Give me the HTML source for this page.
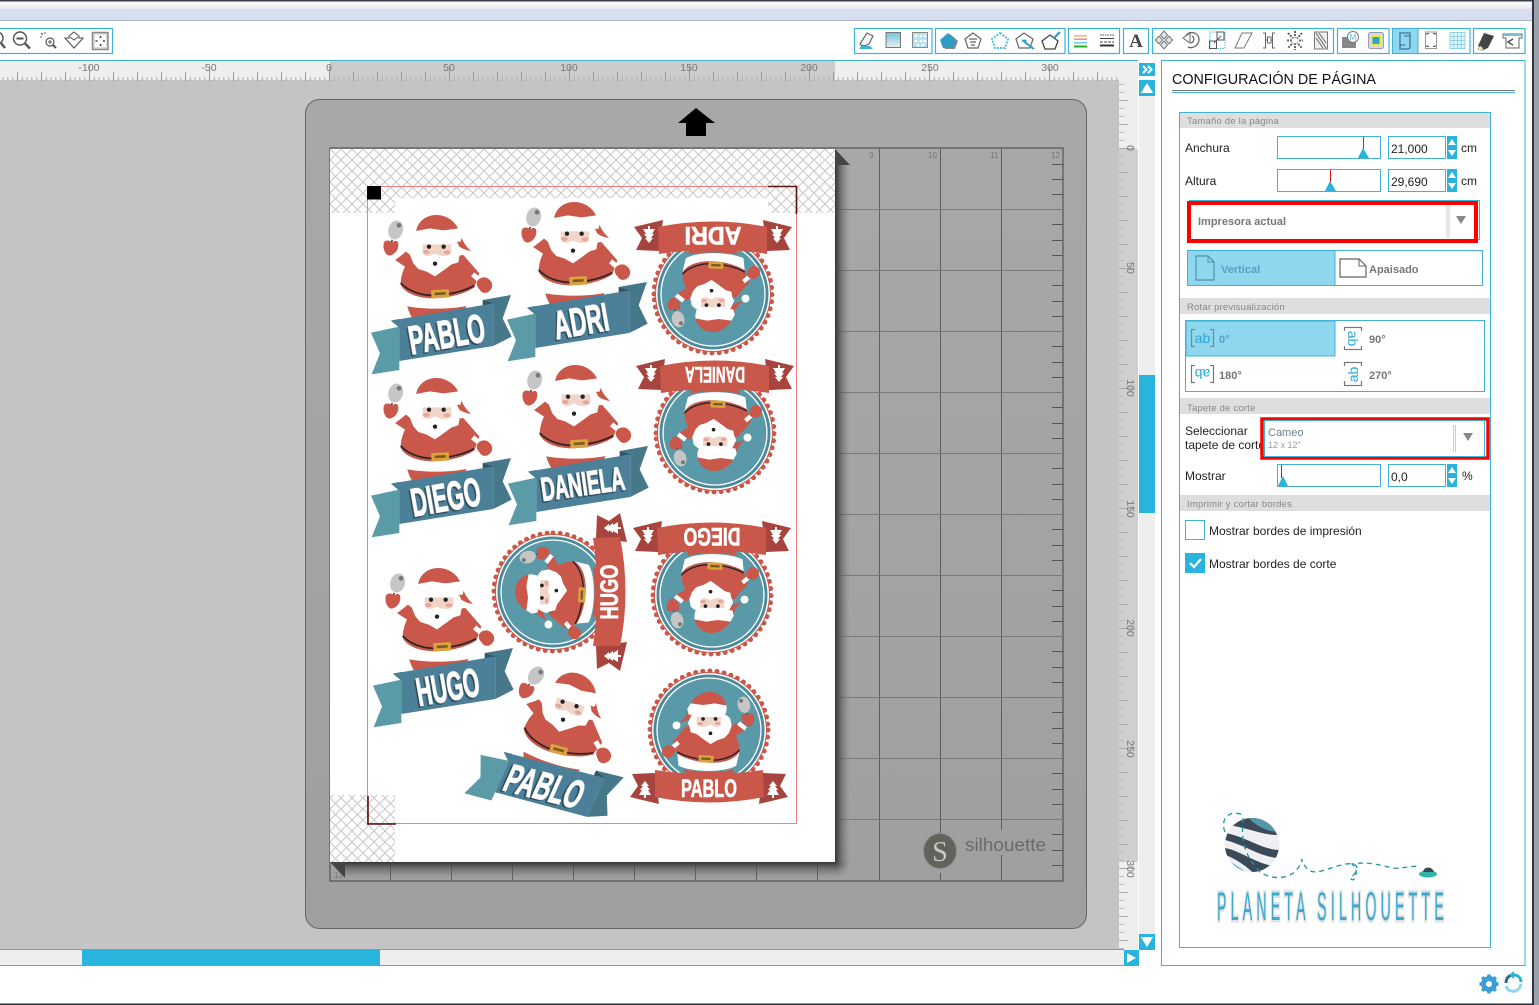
<!DOCTYPE html>
<html><head><meta charset="utf-8"><style>
html,body{margin:0;padding:0;background:#fff;overflow:hidden}
svg{display:block}
text{font-family:"Liberation Sans",sans-serif}
.l{font-size:12px;fill:#222}
.h{font-size:9.5px;fill:#888;letter-spacing:.2px}
.g{font-size:11px;fill:#777;font-weight:bold}
.bb{font-weight:bold;fill:#fff;stroke:#fff;stroke-width:3px;text-anchor:middle;font-size:120px;filter:url(#ds)}
.rb{font-weight:bold;fill:#fff;stroke:#fff;stroke-width:.6px;text-anchor:middle;font-size:25px}
.ic{fill:none;stroke:#666;stroke-width:1.2}
</style></head><body>
<svg width="1539" height="1005" viewBox="0 0 1539 1005" xmlns="http://www.w3.org/2000/svg">
<defs>
<linearGradient id="top" x1="0" y1="0" x2="0" y2="1"><stop offset="0" stop-color="#fff"/><stop offset="1" stop-color="#e8e8ee"/></linearGradient>
<linearGradient id="mat" x1="0" y1="0" x2="0" y2="1"><stop offset="0" stop-color="#a8a8a8"/><stop offset="1" stop-color="#9f9f9f"/></linearGradient>
<linearGradient id="sr" x1="0" y1="0" x2="1" y2="0"><stop offset="0" stop-color="#333"/><stop offset="1" stop-color="#777" stop-opacity="0"/></linearGradient>
<linearGradient id="sb" x1="0" y1="0" x2="0" y2="1"><stop offset="0" stop-color="#333"/><stop offset="1" stop-color="#777" stop-opacity="0"/></linearGradient>
<radialGradient id="sc" gradientUnits="userSpaceOnUse" cx="835" cy="862" r="16"><stop offset="0" stop-color="#333"/><stop offset="1" stop-color="#777" stop-opacity="0"/></radialGradient>
<linearGradient id="gs" x1="0" y1="0" x2="0" y2="1"><stop offset="0" stop-color="#6fc5e2"/><stop offset="1" stop-color="#eee"/></linearGradient>
<filter id="ds" x="-10%" y="-10%" width="120%" height="120%"><feDropShadow dx="-5" dy="4" stdDeviation="0" flood-color="#2b4a5a"/></filter>
<pattern id="hatch" width="11" height="11" patternUnits="userSpaceOnUse" x="330" y="149"><path d="M0 0L11 11M11 0L0 11" stroke="#c6c6c6" stroke-width="1"/></pattern>
<pattern id="rh" width="120" height="20" patternUnits="userSpaceOnUse" x="329" y="61"><path d="M.5 5V20M24.5 11V20M48.5 11V20M72.5 11V20M96.5 11V20" stroke="#999" fill="none"/><path d="M5.3 16V20M10.1 16V20M14.9 16V20M19.7 16V20M29.3 16V20M34.1 16V20M38.9 16V20M43.7 16V20M53.3 16V20M58.1 16V20M62.9 16V20M67.7 16V20M77.3 16V20M82.1 16V20M86.9 16V20M91.7 16V20M101.3 16V20M106.1 16V20M110.9 16V20M115.7 16V20" stroke="#aaa" fill="none"/></pattern>
<pattern id="rv" width="19" height="120" patternUnits="userSpaceOnUse" x="1119" y="148"><path d="M0 .5H16M0 24.5H9M0 48.5H9M0 72.5H9M0 96.5H9" stroke="#aaa" fill="none"/><path d="M0 8.5H5M0 16.5H5M0 32.5H5M0 40.5H5M0 56.5H5M0 64.5H5M0 80.5H5M0 88.5H5M0 104.5H5M0 112.5H5" stroke="#bbb" fill="none"/></pattern>
<clipPath id="mc"><circle r="53"/></clipPath>
<clipPath id="pc"><circle cx="1252" cy="845" r="27"/></clipPath>

<g id="s">
<line x1="187" y1="285" x2="170" y2="328" stroke="#444" stroke-width="5"/>
<ellipse cx="197" cy="255" rx="22" ry="29" transform="rotate(15 197 255)" fill="#c6c6c6"/><circle cx="207" cy="241" r="7" fill="#777"/>
<path d="M162 292C170 282 182 288 188 292C196 284 206 288 205 300C205 315 195 328 180 332C168 332 156 312 162 292Z" fill="#c9574a"/>
<path d="M228 320L260 345L400 330L448 385L432 430C400 450 340 462 300 460C260 458 225 445 212 420C212 395 220 375 225 365L195 345Z" fill="#c9574a"/>
<line x1="190" y1="340" x2="216" y2="320" stroke="#fff" stroke-width="15"/>
<path d="M212 420C225 445 260 458 300 460C340 462 400 450 432 428L428 470C380 495 262 495 224 470Z" fill="#fff"/>
<path d="M232 484C300 495 360 492 410 483C400 505 380 520 350 530L255 530C240 512 235 495 232 484Z" fill="#c9574a"/>
<path d="M212 414C240 445 290 455 330 450C370 447 410 435 432 422" fill="none" stroke="#262626" stroke-width="5"/>
<rect x="304" y="434" width="53" height="25" fill="#dca240" transform="rotate(-3 330 446)"/><rect x="314" y="442" width="33" height="8" fill="#7c5b22" transform="rotate(-3 330 446)"/>
<line x1="428" y1="388" x2="448" y2="405" stroke="#fff" stroke-width="15"/>
<path d="M442 408C450 395 470 395 475 402C490 410 490 430 478 438C470 447 455 445 450 435C440 425 438 415 442 408Z" fill="#c9574a"/>
<path d="M258 262C262 225 295 208 322 210C360 212 385 240 392 270C400 295 410 305 423 318C400 315 385 305 370 290L258 270Z" fill="#c9574a"/>
<circle cx="435" cy="328" r="14" fill="#fff"/>
<path d="M245 303L258 292L275 290L365 288L382 292L395 320L388 335L385 352L365 358L342 375L315 394L290 380L265 372L250 355L240 330Z" fill="#fff"/>
<path d="M258 258L300 250L340 256L385 250L397 270L392 290L360 292L300 296L262 290L258 272Z" fill="#fff"/>
<path d="M278 298H364V322C362 332 340 336 325 330L315 325L305 330C292 336 280 332 278 322Z" fill="#f0d5c8"/>
<circle cx="297" cy="305" r="6.5" fill="#222"/><circle cx="341" cy="305" r="6.5" fill="#222"/>
<ellipse cx="289" cy="321" rx="10" ry="6" fill="#e8a79a"/><ellipse cx="351" cy="322" rx="10" ry="6" fill="#e8a79a"/>
<circle cx="315" cy="356" r="6.5" fill="#222"/>
</g>

<g id="bb">
<polygon points="123,563 208,545 208,675 125,688 150,625" fill="#5b9aa7"/>
<polygon points="458,465 543,450 518,520 545,575 490,603 490,480" fill="#46788a"/>
<polygon points="183,527 208,522 208,548" fill="#2f5566"/>
<polygon points="458,465 490,475 458,482" fill="#2f5566"/>
<polygon points="183,527 490,475 490,603 208,648 208,548" fill="#4b8098"/>
</g>

<g id="tree"><polygon points="0,-8 4,-3 2,-3 5,1 3,1 6,6 1,6 1,9 -1,9 -1,6 -6,6 -3,1 -5,1 -2,-3 -4,-3" fill="#fff"/></g>

<g id="m">
<circle r="59" fill="none" stroke="#c9574a" stroke-width="5" stroke-dasharray="0 7.15" stroke-linecap="round"/>
<circle r="58" fill="#c9574a"/>
<circle r="57" fill="#fff"/>
<circle r="55.5" fill="#4a8a9c"/>
<circle r="52" fill="#5a9aa8" stroke="#fff" stroke-width="1.3"/>
<g clip-path="url(#mc)"><use href="#s" transform="translate(90.6,-97.4) scale(-.283,.283)"/></g>
<polygon points="-77,44 -54,43 -50,74 -79,67 -71,56" fill="#a8443e"/>
<polygon points="77,44 54,43 50,74 79,67 71,56" fill="#a8443e"/>
<path d="M-54,40Q0,48 54,40L55,67Q0,78 -54,67Z" fill="#c9574a"/>
<use href="#tree" transform="translate(-64,59)"/><use href="#tree" transform="translate(64,59)"/>
</g>
</defs>

<!-- window chrome -->
<rect width="1539" height="1005" fill="#fff"/>
<rect width="1539" height="9" fill="url(#top)"/>
<rect width="1539" height="1.5" fill="#3a3f4a"/>
<rect y="9" width="1539" height="11" fill="#d7deef"/>
<rect y="20" width="1539" height="1" fill="#aeb3c6"/>
<rect y="1003.5" width="1539" height="1.5" fill="#2b3038"/>
<rect x="1532" y="0" width="2" height="1005" fill="#30353f"/>
<rect x="1534" y="0" width="5" height="1005" fill="#9aa0ac"/>

<!-- toolbar groups -->
<g fill="none" stroke="#3fb2d6" stroke-width="1.2">
<rect x="-5" y="28.5" width="117.5" height="25"/>
<rect x="854.5" y="28.5" width="77.5" height="25"/>
<rect x="935.5" y="28.5" width="129.5" height="25"/>
<rect x="1068.5" y="28.5" width="51" height="25"/>
<rect x="1123.5" y="28.5" width="25" height="25"/>
<rect x="1152.5" y="28.5" width="181" height="25"/>
<rect x="1337.5" y="28.5" width="51.5" height="25"/>
<rect x="1392.5" y="28.5" width="77.5" height="25"/>
<rect x="1473.5" y="28.5" width="51.5" height="25"/>
</g>
<!-- left tool icons -->
<g fill="none" stroke="#555">
<circle cx="-3" cy="38" r="6" stroke-width="1.4"/><path d="M1 43L5 48" stroke-width="2.4"/>
<circle cx="20" cy="38.5" r="6.5" stroke-width="1.4"/><path d="M16.5 38.5H23.5" stroke-width="2"/><path d="M25 43.500L30 48.500" stroke-width="2.4"/>
<circle cx="50" cy="42" r="4" stroke-width="1.2"/><path d="M48 42H52M50 40V44" /><path d="M53 45L56 48" stroke-width="2"/><path d="M41 33l2 2M45 32v2M40 37h2" stroke-width="1"/>
<path d="M74 32L79 36V38H83L74 48L65 38H69V36Z" stroke-width="1.100"/><path d="M70 37L74 40L78 37" stroke-width="1"/>
<rect x="92.500" y="32.500" width="15.500" height="17" fill="#ddd" stroke="#888" stroke-width="1.5"/><rect x="95" y="35" width="11" height="12" fill="#fff" stroke="none"/><path d="M100.500 36v2M100.500 44v2M95.500 41h2M103 41h2" stroke="#444" stroke-width="1.6"/>
</g>
<!-- group 1 -->
<path d="M860 44L867 33L873 36L870 42C868 46 862 47 860 44Z" class="ic"/><path d="M859 49H873L870 46H861Z" fill="#3fb2d6"/>
<rect x="886" y="32.500" width="14.500" height="15" fill="url(#gs)" stroke="#777"/>
<rect x="912.500" y="32.500" width="15" height="15" fill="#b9e2f1" stroke="#888"/><g fill="#fff"><circle cx="916" cy="36" r="1.300"/><circle cx="921" cy="36" r="1.300"/><circle cx="925" cy="36" r="1.300"/><circle cx="916" cy="41" r="1.300"/><circle cx="921" cy="41" r="1.300"/><circle cx="925" cy="41" r="1.300"/><circle cx="918" cy="45" r="1.300"/><circle cx="923" cy="45" r="1.300"/></g>
<!-- group 2 -->
<polygon points="950,34 958,41 955,49 945,49 942,41" fill="#888"/><polygon points="948,33 956,40 953,48 943,48 940,40" fill="#2e9cc4"/>
<polygon points="973,33 981,39 978,48 968,48 965,39" class="ic" fill="#eee"/><path d="M969 39h8M970 42h6M971 45h4" class="ic" stroke-width=".9"/>
<polygon points="1000,33 1008,39 1005,48 995,48 992,39" fill="none" stroke="#4cbde0" stroke-width="2" stroke-dasharray="2 1.2"/>
<polygon points="1024,33 1033,39 1030,48 1019,48 1016,39" class="ic"/><path d="M1022 40L1034 49" stroke="#2e9cc4" stroke-width="2"/><circle cx="1025" cy="41" r="1.500" fill="#2e9cc4"/>
<polygon points="1050,35 1058,41 1055,49 1045,49 1042,41" fill="none" stroke="#444" stroke-width="1.300"/><path d="M1054 38L1060 32" stroke="#2e9cc4" stroke-width="2.200"/>
<!-- group 3 -->
<rect x="1074" y="35" width="13" height="1.600" fill="#f5b58b"/><rect x="1074" y="38.500" width="13" height="1.500" fill="#f08a8a"/><rect x="1074" y="42" width="13" height="1.500" fill="#6cc8dd"/><rect x="1074" y="45.500" width="13" height="2" fill="#1fb21f"/>
<path d="M1100 35h14" stroke="#444" stroke-dasharray="1.500 1"/><path d="M1100 38.500h14" stroke="#444"/><path d="M1100 42h14" stroke="#444" stroke-dasharray="3 1"/><path d="M1100 45.500h14" stroke="#333" stroke-width="2"/>
<text x="1136" y="47" text-anchor="middle" style="font-family:'Liberation Serif',serif;font-size:19px;font-weight:bold;fill:#444">A</text>
<!-- group 5 -->
<g class="ic" stroke-width="1"><path d="M1164 31l3.500 4-3.500 4-3.500-4zM1164 41l3.500 4-3.500 4-3.500-4zM1159 36l3.500 4-3.500 4-3.500-4zM1169 36l3.500 4-3.500 4-3.500-4z" fill="#e4e4e4" stroke="#777" stroke-width="1"/></g>
<path d="M1186 36C1188 31 1198 31 1199 39C1199 46 1192 49 1188 47" fill="none" stroke="#666" stroke-width="1.300"/><path d="M1183 38L1190 33V43Z" fill="#fff" stroke="#666"/><path d="M1192 36C1195 38 1194 42 1191 43" fill="none" stroke="#666" stroke-width="1.300"/>
<rect x="1210" y="32" width="15" height="16.500" fill="none" stroke="#4cbde0" stroke-dasharray="1.500 1"/><rect x="1209.500" y="41" width="7" height="7.500" fill="none" stroke="#555"/><rect x="1217" y="32" width="7" height="8" fill="none" stroke="#555"/><path d="M1214 43L1221 36" stroke="#555"/>
<polygon points="1242,33 1252,33 1244,48 1235,48" fill="none" stroke="#777"/>
<path d="M1263 33h2.500v15h-2.500M1275 33h-2.500v15h2.500" fill="none" stroke="#666"/><rect x="1267.500" y="37" width="3.500" height="6" fill="none" stroke="#666"/><path d="M1265.500 40h2M1271 40h1.500" stroke="#666"/>
<g stroke="#666" stroke-width="2" stroke-dasharray="2 1"><path d="M1288 33L1302 48M1302 33L1288 48M1295 31V50M1287 40.500H1303"/></g><circle cx="1295" cy="40.500" r="3" fill="#fff"/>
<rect x="1314.500" y="32" width="13" height="17" fill="#eee" stroke="#777"/><path d="M1316 33L1326 48M1319 33L1326 43M1316 38L1323 48" stroke="#666"/>
<!-- group 6 -->
<rect x="1342" y="37" width="14" height="11" fill="#888"/><circle cx="1353" cy="37" r="5.500" fill="#fff" stroke="#777"/><text x="1353" y="40" text-anchor="middle" style="font-size:8px;fill:#4cbde0">M</text>
<rect x="1368.500" y="32.500" width="15" height="16" rx="2" fill="#d9d9d9" stroke="#99b"/><rect x="1371" y="35" width="10" height="11" rx="1" fill="#ecec33"/><rect x="1372.500" y="37" width="7" height="7" fill="#29a6d1"/>
<!-- group 7 -->
<rect x="1393" y="29" width="25" height="24" fill="#8fd7ef"/>
<rect x="1417.500" y="28.500" width="1" height="25" fill="#3fb2d6"/>
<path d="M1400 33H1410V48L1408 49H1400Z" fill="none" stroke="#37789a" stroke-width="1.300"/><path d="M1404 36L1410 36M1400 45L1405 45" stroke="#2a6886"/>
<rect x="1425.500" y="32" width="11" height="16.500" fill="#fff" stroke="#999"/><path d="M1427 35v-1.500h2M1435 35v-1.500h-2M1427 45v1.500h2M1435 45v1.500h-2" fill="none" stroke="#555"/>
<g stroke="#8ed2ea"><rect x="1450" y="32.500" width="15" height="16" fill="#e8f6fb"/><path d="M1453.700 32.500v16M1457.500 32.500v16M1461.200 32.500v16M1450 36.500h15M1450 40.500h15M1450 44.500h15"/></g>
<!-- group 8 -->
<polygon points="1484,33 1494,36 1488,48 1483,50 1478,46" fill="#444"/><polygon points="1480,46 1483,48 1482,50.500 1478,49" fill="#ecec9f" stroke="#999" stroke-width=".6"/>
<path d="M1503 34H1522V38H1519V48H1506V38H1503Z" fill="#fff" stroke="#666"/><path d="M1504 34H1521V36H1504Z" fill="#7bbfd0"/><path d="M1513 39L1508 42L1513 45" fill="none" stroke="#333" stroke-width="1.300"/>

<!-- canvas -->
<rect x="0" y="61" width="1138" height="889" fill="#c4c4c4"/>
<rect x="0" y="60" width="1139" height="1" fill="#3fb2d6"/>
<rect x="0" y="61" width="1138" height="19" fill="#eeeeee"/>
<rect x="330" y="61" width="505" height="19" fill="#cccccc"/>
<rect x="0" y="61" width="1119" height="20" fill="url(#rh)"/>
<g style="font-size:10.500px" fill="#777" text-anchor="middle">
<text x="89" y="71">-100</text><text x="209" y="71">-50</text><text x="329" y="71">0</text><text x="449" y="71">50</text><text x="569" y="71">100</text><text x="689" y="71">150</text><text x="809" y="71">200</text><text x="930" y="71">250</text><text x="1050" y="71">300</text>
</g>
<rect x="1119" y="61" width="19" height="889" fill="#eeeeee"/>
<rect x="1119" y="149" width="19" height="713" fill="#cfcfcf"/>
<rect x="1119" y="81" width="19" height="869" fill="url(#rv)"/>
<g style="font-size:10.500px" fill="#777" text-anchor="middle">
<text transform="translate(1127,148) rotate(90)">0</text><text transform="translate(1127,268) rotate(90)">50</text><text transform="translate(1127,388) rotate(90)">100</text><text transform="translate(1127,509) rotate(90)">150</text><text transform="translate(1127,628) rotate(90)">200</text><text transform="translate(1127,749) rotate(90)">250</text><text transform="translate(1127,869) rotate(90)">300</text>
</g>

<!-- mat -->
<rect x="305.500" y="99.500" width="781" height="829" rx="14" fill="url(#mat)" stroke="#666"/>
<path d="M678 123L696 108L715 123H706V136H686V123Z" fill="#000"/>
<rect x="330" y="148" width="733" height="733" fill="none" stroke="#444"/>
<g stroke="#5e5e5e" stroke-width="1" fill="none">
<path d="M879.500 148V881M1001.500 148V830M1001.500 855V881M940.500 148V835M940.500 873V881"/>
<path d="M390.500 862V881M451.500 862V881M512.500 862V881M573.500 862V881M634.500 862V881M695.500 862V881M756.500 862V881M817.500 862V881"/>
</g>
<g stroke="#7a7a7a" fill="none"><path d="M835 209.500H1063M835 270.500H1063M835 331.500H1063M835 392.500H1063M835 453.500H1063M835 514.500H1063M835 575.500H1063M835 636.500H1063M835 697.500H1063M835 758.500H1063M835 819.500H1063"/></g>
<path d="M1052 164.500h11M1052 179.500h11M1052 194.500h11M1052 224.500h11M1052 240.500h11M1052 255.500h11M1052 285.500h11M1052 301.500h11M1052 316.500h11M1052 346.500h11M1052 362.500h11M1052 377.500h11M1052 407.500h11M1052 423.500h11M1052 438.500h11M1052 468.500h11M1052 484.500h11M1052 499.500h11M1052 529.500h11M1052 545.500h11M1052 560.500h11M1052 590.500h11M1052 606.500h11M1052 621.500h11M1052 651.500h11M1052 667.500h11M1052 682.500h11M1052 712.500h11M1052 728.500h11M1052 743.500h11M1052 773.500h11M1052 789.500h11M1052 804.500h11M1052 834.500h11M1052 850.500h11M1052 865.500h11" stroke="#555" fill="none"/>
<g style="font-size:8px" fill="#777"><text x="869" y="158">9</text><text x="928" y="158">10</text><text x="990" y="158">11</text><text x="1051" y="158">12</text><text x="334" y="878">12</text></g>
<ellipse cx="940" cy="851" rx="16.500" ry="17.500" fill="#62625a" stroke="#8a8a84"/>
<text x="940" y="861" text-anchor="middle" style="font-family:'Liberation Serif',serif;font-size:28px;fill:#c9c9c3">S</text>
<text x="965" y="851" style="font-size:18.500px;fill:#6a6a66" textLength="81" lengthAdjust="spacingAndGlyphs">silhouette</text>

<!-- page shadow -->
<polygon points="835,149 850,165 835,165" fill="#444"/>
<rect x="835" y="165" width="15" height="697" fill="url(#sr)"/>
<polygon points="330,862 345,878 345,862" fill="#444"/>
<rect x="345" y="862" width="490" height="16" fill="url(#sb)"/>
<rect x="835" y="862" width="16" height="16" fill="url(#sc)"/>

<!-- paper -->
<rect x="330" y="149" width="505" height="713" fill="#fff"/>
<rect x="330" y="149" width="505" height="49" fill="url(#hatch)"/>
<rect x="330" y="198" width="65" height="15" fill="url(#hatch)"/>
<rect x="768" y="198" width="67" height="15" fill="url(#hatch)"/>
<rect x="330" y="795" width="65" height="67" fill="url(#hatch)"/>

<!-- santas & banners -->
<use href="#s" transform="translate(330,145) scale(.3333)"/>
<use href="#s" transform="translate(468,132) scale(.3333)"/>
<use href="#s" transform="translate(330,308) scale(.3333)"/>
<use href="#s" transform="translate(469,295) scale(.3333)"/>
<use href="#s" transform="translate(332,498) scale(.3333)"/>
<use href="#s" transform="translate(567,714) rotate(18) translate(-107,-112) scale(.3333)"/>

<g transform="translate(330,145) scale(.3333)"><use href="#bb"/><text class="bb" transform="translate(350,565) rotate(-10)" y="43" textLength="230" lengthAdjust="spacingAndGlyphs">PABLO</text></g>
<g transform="translate(466,132) scale(.3333)"><use href="#bb"/><text class="bb" transform="translate(345,565) rotate(-10)" y="43" textLength="165" lengthAdjust="spacingAndGlyphs">ADRI</text></g>
<g transform="translate(330,308) scale(.3333)"><use href="#bb"/><text class="bb" transform="translate(347,565) rotate(-10)" y="43" textLength="210" lengthAdjust="spacingAndGlyphs">DIEGO</text></g>
<g transform="translate(467,296) scale(.3333)"><use href="#bb"/><text class="bb" style="font-size:100px" transform="translate(347,562) rotate(-8)" y="36" textLength="252" lengthAdjust="spacingAndGlyphs">DANIELA</text></g>
<g transform="translate(332,498) scale(.3333)"><use href="#bb"/><text class="bb" transform="translate(347,565) rotate(-10)" y="43" textLength="190" lengthAdjust="spacingAndGlyphs">HUGO</text></g>
<g transform="translate(545,785) rotate(24) translate(-112,-189) scale(.3333)"><use href="#bb"/><text class="bb" transform="translate(337,570) rotate(-10) skewX(-10)" y="43" textLength="235" lengthAdjust="spacingAndGlyphs">PABLO</text></g>

<g transform="translate(709,730)"><use href="#m"/><text class="rb" y="67" textLength="56" lengthAdjust="spacingAndGlyphs">PABLO</text></g>
<g transform="translate(713,294) rotate(180)"><use href="#m"/><text class="rb" y="67" textLength="57" lengthAdjust="spacingAndGlyphs">ADRI</text></g>
<g transform="translate(715,433) rotate(180)"><use href="#m"/><text class="rb" style="font-size:22px" y="66" textLength="60" lengthAdjust="spacingAndGlyphs">DANIELA</text></g>
<g transform="translate(712,595) rotate(180)"><use href="#m"/><text class="rb" y="67" textLength="57" lengthAdjust="spacingAndGlyphs">DIEGO</text></g>
<g transform="translate(553,592) rotate(-90)"><use href="#m"/><text class="rb" y="65" textLength="55" lengthAdjust="spacingAndGlyphs">HUGO</text></g>

<!-- reg marks -->
<rect x="367.500" y="186.500" width="429" height="637" fill="none" stroke="#f08080"/>
<rect x="367" y="186" width="14" height="13.500" fill="#000"/>
<path d="M768 186.500H796.500V214" fill="none" stroke="#5a1010" stroke-width="1.600"/>
<path d="M368 796V824H396" fill="none" stroke="#5a1010" stroke-width="1.600"/>

<!-- bottom scrollbar -->
<rect x="0" y="949" width="1124" height="16.500" fill="#eeeeee"/>
<rect x="82" y="949" width="298" height="16.500" fill="#29b4de"/>
<path d="M0 949.500H1124M0 965.500H1124" stroke="#3fb2d6"/>
<rect x="1124" y="950" width="15" height="16" fill="#29b4de"/><polygon points="1127,953 1136,958 1127,963" fill="#fff"/>
<!-- vertical scrollbar -->
<rect x="1138" y="60" width="17" height="890" fill="#fff"/>
<rect x="1139" y="63" width="16" height="13" fill="#29b4de"/>
<path d="M1143 66L1146.500 69.500L1143 73M1148 66L1151.500 69.500L1148 73" fill="none" stroke="#fff" stroke-width="2"/>
<rect x="1139" y="80" width="16" height="870" fill="#eeeeee"/>
<rect x="1139" y="80" width="16" height="16" fill="#29b4de"/><polygon points="1147,83 1153,93 1141,93" fill="#fff"/>
<rect x="1139" y="375" width="16" height="138" fill="#29b4de"/>
<rect x="1139" y="934" width="16" height="16" fill="#29b4de"/><polygon points="1147,947 1153,937 1141,937" fill="#fff"/>

<!-- panel -->
<rect x="1161.500" y="60.500" width="363.500" height="905" fill="#fff" stroke="#3fb2d6"/>
<text x="1172" y="84" style="font-size:14.500px;fill:#111" textLength="204" lengthAdjust="spacingAndGlyphs">CONFIGURACIÓN DE PÁGINA</text>
<rect x="1172" y="90" width="343" height="1" fill="#777"/><rect x="1172" y="92" width="343" height="1" fill="#3fb2d6"/>
<rect x="1179.500" y="112.500" width="311" height="835" fill="#fff" stroke="#3fb2d6"/>

<rect x="1180" y="113" width="310" height="15" fill="#dedede"/><text class="h" x="1187" y="124">Tamaño de la página</text>
<text class="l" x="1185" y="152">Anchura</text>
<rect x="1277.500" y="136.500" width="103" height="22" fill="#fff" stroke="#3fb2d6"/><path d="M1363.500 137V150" stroke="#e11"/><polygon points="1363,148 1369,158 1358,158" fill="#29b4de"/>
<rect x="1388.500" y="136.500" width="57" height="22" fill="#fff" stroke="#3fb2d6"/><text class="l" x="1391" y="153">21,000</text>
<rect x="1447" y="136" width="10" height="23" fill="#29b4de"/><polygon points="1452,139 1456,145 1448,145" fill="#fff"/><polygon points="1452,156 1456,150 1448,150" fill="#fff"/>
<text class="l" x="1461" y="152">cm</text>
<text class="l" x="1185" y="185">Altura</text>
<rect x="1277.500" y="169.500" width="103" height="22" fill="#fff" stroke="#3fb2d6"/><path d="M1330.500 170V183" stroke="#e11"/><polygon points="1330,181 1336,191 1325,191" fill="#29b4de"/>
<rect x="1388.500" y="169.500" width="57" height="22" fill="#fff" stroke="#3fb2d6"/><text class="l" x="1391" y="186">29,690</text>
<rect x="1447" y="169" width="10" height="23" fill="#29b4de"/><polygon points="1452,172 1456,178 1448,178" fill="#fff"/><polygon points="1452,189 1456,183 1448,183" fill="#fff"/>
<text class="l" x="1461" y="185">cm</text>

<rect x="1189.500" y="200.500" width="290" height="39" fill="#fff" stroke="#3fb2d6"/>
<rect x="1189" y="203" width="287" height="38" fill="none" stroke="#f00" stroke-width="4"/>
<text class="g" x="1198" y="225">Impresora actual</text>
<path d="M1447 205V238M1449 205V238" stroke="#ccc"/><polygon points="1456,216 1466,216 1461,224" fill="#888"/>

<rect x="1187.500" y="250.500" width="295" height="35" fill="#fff" stroke="#3fb2d6"/>
<rect x="1188" y="251" width="147" height="34" fill="#8fd7ef"/><rect x="1334.500" y="250.500" width="1" height="35" fill="#3fb2d6"/>
<path d="M1196 256H1208L1214 262V280H1196Z" fill="none" stroke="#4f8fab" stroke-width="1.200"/><path d="M1208 256V262H1214" fill="none" stroke="#4f8fab"/>
<text class="g" x="1221" y="273" style="fill:#5a9fc0">Vertical</text>
<path d="M1340 259H1359L1366 266V277H1340Z" fill="#fff" stroke="#666" stroke-width="1.200"/><path d="M1359 259V266H1366" fill="none" stroke="#666"/>
<text class="g" x="1369" y="273">Apaisado</text>

<rect x="1180" y="298" width="310" height="16" fill="#dedede"/><text class="h" x="1187" y="310">Rotar previsualización</text>
<rect x="1185.500" y="320.500" width="299" height="71" fill="#fff" stroke="#3fb2d6"/>
<rect x="1186" y="321" width="149" height="35" fill="#8fd7ef" stroke="#3fb2d6"/>
<g fill="none" stroke="#6e8c98" stroke-width="1.200"><rect x="1191.500" y="329.500" width="22" height="17"/></g>
<g fill="none" stroke="#777" stroke-width="1.200"><rect x="1344.500" y="327.500" width="17" height="22"/><rect x="1191.500" y="365.500" width="22" height="17"/><rect x="1344.500" y="362.500" width="17" height="23"/></g>
<rect x="1195" y="328" width="15" height="20" fill="#8fd7ef"/><rect x="1343" y="331" width="20" height="15" fill="#fff"/><rect x="1195" y="364" width="15" height="20" fill="#fff"/><rect x="1343" y="366" width="20" height="15" fill="#fff"/>
<g style="font-size:14px" fill="#29a9d5" text-anchor="middle">
<text x="1202.500" y="343">ab</text>
<text transform="translate(1348,338.500) rotate(90)">ab</text>
<text transform="translate(1202.500,369) rotate(180)">ab</text>
<text transform="translate(1358,374.500) rotate(-90)">ab</text>
</g>
<text class="g" x="1219" y="343" style="fill:#5a9fc0">0°</text><text class="g" x="1369" y="343">90°</text><text class="g" x="1219" y="379">180°</text><text class="g" x="1369" y="379">270°</text>

<rect x="1180" y="398" width="310" height="16" fill="#dedede"/><text class="h" x="1187" y="411">Tapete de corte</text>
<text class="l" x="1185" y="435">Seleccionar</text><text class="l" x="1185" y="449">tapete de corte</text>
<rect x="1262" y="419" width="226" height="39" fill="#fff" stroke="#f00" stroke-width="3.500"/>
<rect x="1264.500" y="420.500" width="220" height="36" fill="#fff" stroke="#3fb2d6"/>
<text class="g" x="1268" y="436" style="font-weight:normal;font-size:11px;fill:#6f7f8a">Cameo</text><text x="1268" y="448" style="font-size:9px;fill:#999">12 x 12"</text>
<path d="M1453.500 425V452M1455.500 425V452" stroke="#ccc"/><polygon points="1463,433 1473,433 1468,441" fill="#888"/>

<text class="l" x="1185" y="480">Mostrar</text>
<rect x="1277.500" y="464.500" width="103" height="22" fill="#fff" stroke="#3fb2d6"/><path d="M1281.500 465V478" stroke="#e11"/><polygon points="1283,476 1288,486 1278,486" fill="#29b4de"/>
<rect x="1388.500" y="464.500" width="57" height="22" fill="#fff" stroke="#3fb2d6"/><text class="l" x="1391" y="481">0,0</text>
<rect x="1447" y="464" width="10" height="23" fill="#29b4de"/><polygon points="1452,467 1456,473 1448,473" fill="#fff"/><polygon points="1452,484 1456,478 1448,478" fill="#fff"/>
<text class="l" x="1462" y="480">%</text>

<rect x="1180" y="495" width="310" height="16" fill="#dedede"/><text class="h" x="1187" y="507">Imprimir y cortar bordes</text>
<rect x="1185.500" y="520.500" width="19" height="19" fill="#fff" stroke="#3fb2d6"/><text class="l" x="1209" y="535">Mostrar bordes de impresión</text>
<rect x="1185" y="553" width="20" height="20" fill="#29b4de"/><path d="M1190 563L1194 567L1201 559" fill="none" stroke="#fff" stroke-width="2.200"/><text class="l" x="1209" y="568">Mostrar bordes de corte</text>

<!-- planeta silhouette logo -->
<circle cx="1252" cy="845" r="27.500" fill="#f0f0f2"/>
<g clip-path="url(#pc)">
<path d="M1225 815H1280V835C1262 836 1245 826 1225 825Z" fill="#3b4a58"/>
<path d="M1245 815H1280V832C1266 832 1255 825 1245 815Z" fill="#5397a9"/>
<path d="M1225 833C1245 836 1262 850 1280 850V858C1262 858 1245 845 1225 840Z" fill="#3b4a58"/>
<path d="M1225 848C1240 850 1262 868 1280 866V880H1260C1250 868 1235 858 1225 855Z" fill="#3b4a58"/>
<path d="M1225 858C1240 868 1250 875 1262 880H1225Z" fill="#4ab3d2"/>
</g>
<path d="M1225 832C1220 820 1228 810 1240 814C1250 818 1230 840 1260 872C1272 880 1290 880 1298 868C1305 860 1300 858 1302 860C1310 880 1320 870 1345 864C1365 862 1355 875 1350 878C1355 885 1360 870 1352 864C1375 860 1390 870 1400 868L1417 866" fill="none" stroke="#1d93a8" stroke-width="1.300" stroke-dasharray="5 4"/>
<ellipse cx="1428" cy="874" rx="9" ry="3.500" fill="#2fb5a6"/><path d="M1423 872C1424 866 1432 866 1434 872Z" fill="#3b4a58"/>
<text x="1217" y="920" textLength="231" lengthAdjust="spacingAndGlyphs" style="font-size:40px;fill:#3aa9cc;stroke:#e2e2e2;stroke-width:5px;paint-order:stroke;letter-spacing:12px">PLANETA SILHOUETTE</text>

<!-- bottom right icons -->
<g transform="translate(1489,984)"><circle r="5.500" fill="none" stroke="#3a9fd4" stroke-width="5"/><g stroke="#3a9fd4" stroke-width="3.500"><path d="M0-9.500V-6M0 9.500V6M-9.500 0H-6M9.500 0H6M-6.800-6.800L-4.200-4.200M6.800-6.800L4.200-4.200M-6.800 6.800L-4.200 4.200M6.800 6.800L4.200 4.200"/></g></g>
<path d="M1506 983C1506 977 1510 975 1514 975" fill="none" stroke="#2b6a80" stroke-width="3"/><path d="M1514 975C1518 975 1521 978 1521 982" fill="none" stroke="#29b4de" stroke-width="3"/><path d="M1521 984C1520 989 1516 992 1512 991C1509 991 1507 989 1506 986" fill="none" stroke="#8fd7ef" stroke-width="3"/><polygon points="1514,971 1514,979 1509,975" fill="#29b4de"/>
</svg>
</body></html>
